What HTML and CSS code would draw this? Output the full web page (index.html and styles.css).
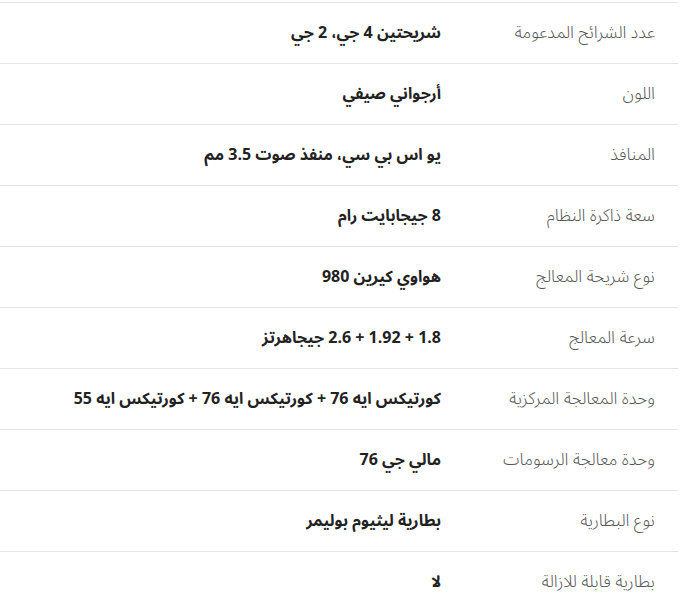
FILE: index.html
```html
<!DOCTYPE html>
<html lang="ar" dir="rtl">
<head>
<meta charset="utf-8">
<link rel="stylesheet" href="styles.css">
</head>
<body>
<div class="specs">
  <div class="row"><div class="label">عدد الشرائح المدعومة</div><div class="value">شريحتين 4 جي، 2 جي</div></div>
  <div class="row"><div class="label">اللون</div><div class="value">أرجواني صيفي</div></div>
  <div class="row"><div class="label">المنافذ</div><div class="value">يو اس بي سي، منفذ صوت 3.5 مم</div></div>
  <div class="row"><div class="label">سعة ذاكرة النظام</div><div class="value">8 جيجابايت رام</div></div>
  <div class="row"><div class="label">نوع شريحة المعالج</div><div class="value">هواوي كيرين 980</div></div>
  <div class="row"><div class="label">سرعة المعالج</div><div class="value">1.8 + 1.92 + 2.6 جيجاهرتز</div></div>
  <div class="row"><div class="label">وحدة المعالجة المركزية</div><div class="value">كورتيكس ايه 76 + كورتيكس ايه 76 + كورتيكس ايه 55</div></div>
  <div class="row"><div class="label">وحدة معالجة الرسومات</div><div class="value">مالي جي 76</div></div>
  <div class="row"><div class="label">نوع البطارية</div><div class="value">بطارية ليثيوم بوليمر</div></div>
  <div class="row"><div class="label">بطارية قابلة للازالة</div><div class="value">لا</div></div>
</div>
</body>
</html>
```
FILE: styles.css
```css
html, body {
  margin: 0;
  padding: 0;
  background: #ffffff;
}
body {
  font-family: "Noto Sans Arabic", "DejaVu Sans", "Noto Sans", sans-serif;
  font-size: 16px;
}
.specs {
  margin-right: 4px;
  padding-top: 2px;
}
.row {
  display: flex;
  align-items: center;
  height: 60px;
  border-top: 1px solid #e4e4e4;
}
.label {
  width: 237px;
  padding-right: 23px;
  box-sizing: border-box;
  color: #555555;
  font-size: 17px;
  font-weight: 300;
}
.value {
  flex: 1;
  color: #222222;
  font-size: 16px;
  font-weight: 700;
}
```
